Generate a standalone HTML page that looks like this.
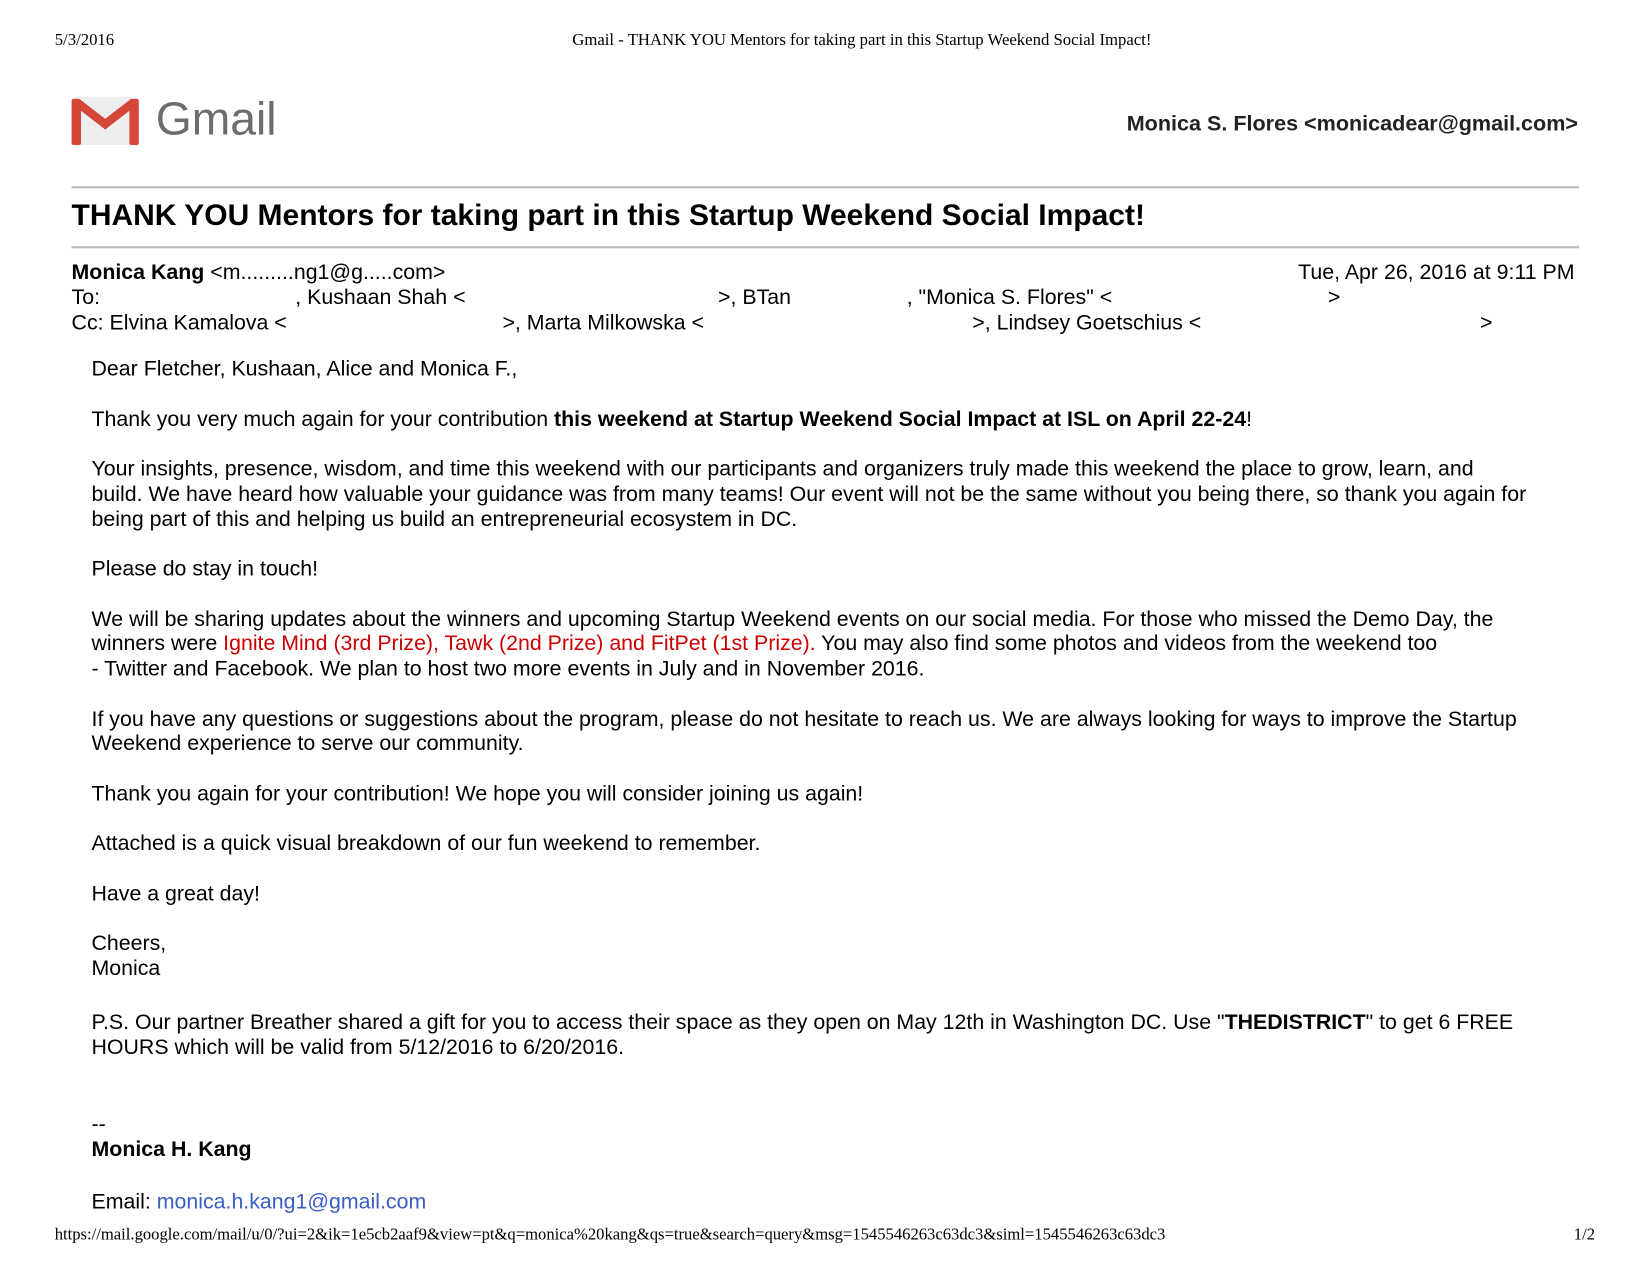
<!DOCTYPE html>
<html><head><meta charset="utf-8">
<style>
html,body{margin:0;padding:0;background:#fff;width:1650px;height:1275px;overflow:hidden}
#w{position:absolute;left:0;top:0;width:1568px;height:1212px;transform:scale(1.052);transform-origin:0 0;font-family:"Liberation Sans",Arial,sans-serif;color:#000}
.a{position:absolute;white-space:nowrap}
.ser{font-family:"Liberation Serif",serif;font-size:15.9px}
.b{font-size:20.3px;line-height:23.75px}
.red{color:#cc0000}
.hr{position:absolute;left:68px;width:1433px;height:2px;background:#bbb}
</style></head><body><div id="w">
<div class="a ser" style="left:52px;top:30px">5/3/2016</div>
<div class="a ser" style="left:544px;top:30px">Gmail - THANK YOU Mentors for taking part in this Startup Weekend Social Impact!</div>

<svg class="a" style="left:68px;top:92px" width="64" height="46" viewBox="0 0 64 46">
<rect x="0" y="0" width="64" height="46" rx="3" fill="#eee"/>
<path d="M6 6 L32 26 L58 6" fill="none" stroke="#d44638" stroke-width="8"/>
<rect x="0" y="2" width="9" height="44" rx="2" fill="#d44638"/>
<rect x="55" y="2" width="9" height="44" rx="2" fill="#d44638"/>
</svg>
<div class="a" style="left:148px;top:89px;font-size:44px;color:#6d6d6d">Gmail</div>
<div class="a" style="left:1071px;top:106px;font-size:20.5px;font-weight:bold;color:#222">Monica S. Flores &lt;monicadear@gmail.com&gt;</div>

<div class="hr" style="top:177px"></div>
<div class="a" style="left:68px;top:189px;font-size:28.5px;font-weight:bold">THANK YOU Mentors for taking part in this Startup Weekend Social Impact!</div>
<div class="hr" style="top:234px"></div>

<div class="a b" style="left:68px;top:248px"><b>Monica Kang</b> &lt;m.........ng1@g.....com&gt;</div>
<div class="a b" style="left:1234px;top:248px">Tue, Apr 26, 2016 at 9:11 PM</div>
<div class="a b" style="left:68px;top:272px">To: <span style="display:inline-block;width:180px"></span>, Kushaan Shah &lt;<span style="display:inline-block;width:240px"></span>&gt;, BTan<span style="display:inline-block;width:110px"></span>, "Monica S. Flores" &lt;<span style="display:inline-block;width:205px"></span>&gt;</div>
<div class="a b" style="left:68px;top:296px">Cc: Elvina Kamalova &lt;<span style="display:inline-block;width:205px"></span>&gt;, Marta Milkowska &lt;<span style="display:inline-block;width:255px"></span>&gt;, Lindsey Goetschius &lt;<span style="display:inline-block;width:265px"></span>&gt;</div>

<div class="a b" style="left:87px;top:340px">Dear Fletcher, Kushaan, Alice and Monica F.,<br><br>
Thank you very much again for your contribution <b>this weekend at Startup Weekend Social Impact at ISL on April 22-24</b>!<br><br>
Your insights, presence, wisdom, and time this weekend with our participants and organizers truly made this weekend the place to grow, learn, and<br>
build. We have heard how valuable your guidance was from many teams! Our event will not be the same without you being there, so thank you again for<br>
being part of this and helping us build an entrepreneurial ecosystem in DC.<br><br>
Please do stay in touch!<br><br>
We will be sharing updates about the winners and upcoming Startup Weekend events on our social media. For those who missed the Demo Day, the<br>
winners were <span class="red">Ignite Mind (3rd Prize), Tawk (2nd Prize) and FitPet (1st Prize).</span> You may also find some photos and videos from the weekend too<br>
- Twitter and Facebook. We plan to host two more events in July and in November 2016.<br><br>
If you have any questions or suggestions about the program, please do not hesitate to reach us. We are always looking for ways to improve the Startup<br>
Weekend experience to serve our community.<br><br>
Thank you again for your contribution! We hope you will consider joining us again!<br><br>
Attached is a quick visual breakdown of our fun weekend to remember.<br><br>
Have a great day!<br><br>
Cheers,<br>Monica</div>
<div class="a b" style="left:87px;top:961px">P.S. Our partner Breather shared a gift for you to access their space as they open on May 12th in Washington DC. Use "<b>THEDISTRICT</b>" to get 6 FREE<br>
HOURS which will be valid from 5/12/2016 to 6/20/2016.</div>
<div class="a b" style="left:87px;top:1058px">--</div>
<div class="a b" style="left:87px;top:1082px;font-weight:bold">Monica H. Kang</div>
<div class="a b" style="left:87px;top:1132px">Email: <span style="color:#3b5cc4">monica.h.kang1@gmail.com</span></div>

<div class="a ser" style="left:52px;top:1165px;font-size:15.8px">https://mail.google.com/mail/u/0/?ui=2&amp;ik=1e5cb2aaf9&amp;view=pt&amp;q=monica%20kang&amp;qs=true&amp;search=query&amp;msg=1545546263c63dc3&amp;siml=1545546263c63dc3</div>
<div class="a ser" style="left:1496px;top:1165px;font-size:15.8px">1/2</div>
</div></body></html>
